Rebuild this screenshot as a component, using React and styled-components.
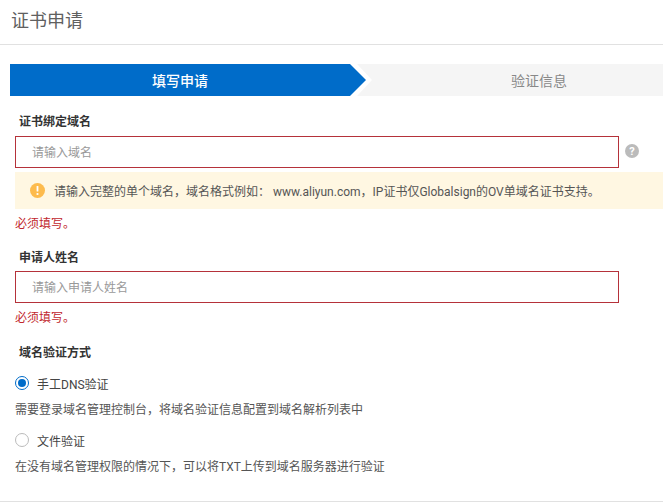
import React from "react";
import styled, { createGlobalStyle } from "styled-components";

const Global = createGlobalStyle`
  html, body { margin: 0; padding: 0; background: #fff; }
  body { font-family: Roboto, "Noto Sans CJK SC", sans-serif; font-size: 12px; color: #333; }
  * { box-sizing: border-box; }
`;
const Page = styled.div`
  width: 663px; height: 504px; overflow: hidden; display: flex; flex-direction: column;
`;
const Header = styled.header`
  height: 45px; padding: 10px 0 0 11px; border-bottom: 1px solid #e1e1e1; flex: none;
`;
const Title = styled.h1`
  margin: 0; font-size: 18px; line-height: 22px; font-weight: 400; color: #606060;
`;
const Steps = styled.div`
  display: flex; height: 32px; margin: 19px 0 0 10px; background: #f5f5f5; flex: none;
`;
const ActiveStep = styled.div`
  position: relative; width: 340px; background: #006cc9; color: #fff; font-size: 14px; font-weight: 500;
  display: flex; align-items: center; justify-content: center;
  &::before {
    content: ""; position: absolute; left: 100%; top: 0; width: 22px; height: 32px;
    background: #fff; clip-path: polygon(0 0, 7px 0, 100% 50%, 7px 100%, 0 100%);
  }
  &::after {
    content: ""; position: absolute; left: 100%; top: 0; width: 16px; height: 32px;
    background: #006cc9; clip-path: polygon(0 0, 100% 50%, 0 100%);
  }
`;
const IdleStep = styled.div`
  flex: 1; padding-left: 65px; color: #888; font-size: 14px; font-weight: 400;
  display: flex; align-items: center; justify-content: center;
`;
const Form = styled.form`
  flex: 1; display: flex; flex-direction: column; padding: 16px 0 0 15px; border-bottom: 1px solid #e1e1e1; margin-bottom: 2px;
`;
const Label = styled.div`
  padding-left: 4px; height: 18px; line-height: 18px; margin-top: ${p => p.$top || 0}px;
  font-size: 12px; font-weight: 700; color: #333;
`;
const InputRow = styled.div`
  display: flex; align-items: center; gap: 6px; margin-top: ${p => p.$top}px;
`;
const Field = styled.input`
  width: 604px; height: 32px; padding: 2px 16px 0; border: 1px solid #b5323a; outline: none; background: #fff;
  font: inherit; font-size: 12px; color: #333;
  &::placeholder { color: #999; opacity: 1; }
`;
const Help = styled.span`
  width: 14px; height: 14px; margin-top: -2px; border-radius: 50%; background: #bbb; color: #fff; font-size: 11px; font-weight: 700;
  display: flex; align-items: center; justify-content: center;
`;
const Alert = styled.div`
  display: flex; align-items: center; gap: 9px; height: 37px; margin-top: 4px; padding-left: 15px; background: #fff7e2; color: #555; font-size: 12px;
`;
const Err = styled.div`
  height: 18px; line-height: 18px; margin-top: ${p => p.$top}px; color: #c1272d; font-size: 12px;
`;
const RadioRow = styled.label`
  display: flex; align-items: center; gap: 8px; height: 18px; margin-top: ${p => p.$top}px; color: #444; font-size: 12px;
`;
const Radio = styled.span`
  width: 14px; height: 14px; border-radius: 50%; background: #fff; flex: none;
  border: 1px solid ${p => (p.$on ? "#006cc9" : "#bbb")};
  display: flex; align-items: center; justify-content: center;
  &::after { content: ""; width: 8px; height: 8px; border-radius: 50%; background: ${p => (p.$on ? "#006cc9" : "transparent")}; }
`;
const Desc = styled.div`
  height: 18px; line-height: 18px; margin-top: ${p => p.$top}px; color: #555; font-size: 12px;
`;

const Warn = () => (
  <svg width="15" height="15" viewBox="0 0 15 15" style={{ flex: "none" }}>
    <circle cx="7.5" cy="7.5" r="7.5" fill="#fdbb4d" />
    <rect x="6.6" y="3" width="1.8" height="5.6" rx="0.6" fill="#fff" />
    <circle cx="7.5" cy="11" r="1.1" fill="#fff" />
  </svg>
);

export default function App() {
  return (
    <Page>
      <Global />
      <Header><Title>证书申请</Title></Header>
      <Steps>
        <ActiveStep>填写申请</ActiveStep>
        <IdleStep>验证信息</IdleStep>
      </Steps>
      <Form>
        <Label $top={1}>证书绑定域名</Label>
        <InputRow $top={5}>
          <Field placeholder="请输入域名" readOnly />
          <Help>?</Help>
        </InputRow>
        <Alert><Warn />请输入完整的单个域名，域名格式例如： www.aliyun.com，IP证书仅Globalsign的OV单域名证书支持。</Alert>
        <Err $top={6}>必须填写。</Err>
        <Label $top={16}>申请人姓名</Label>
        <InputRow $top={4}><Field placeholder="请输入申请人姓名" readOnly /></InputRow>
        <Err $top={6}>必须填写。</Err>
        <Label $top={17}>域名验证方式</Label>
        <RadioRow $top={12}><Radio $on />手工DNS验证</RadioRow>
        <Desc $top={9}>需要登录域名管理控制台，将域名验证信息配置到域名解析列表中</Desc>
        <RadioRow $top={12}><Radio />文件验证</RadioRow>
        <Desc $top={9}>在没有域名管理权限的情况下，可以将TXT上传到域名服务器进行验证</Desc>
      </Form>
    </Page>
  );
}
